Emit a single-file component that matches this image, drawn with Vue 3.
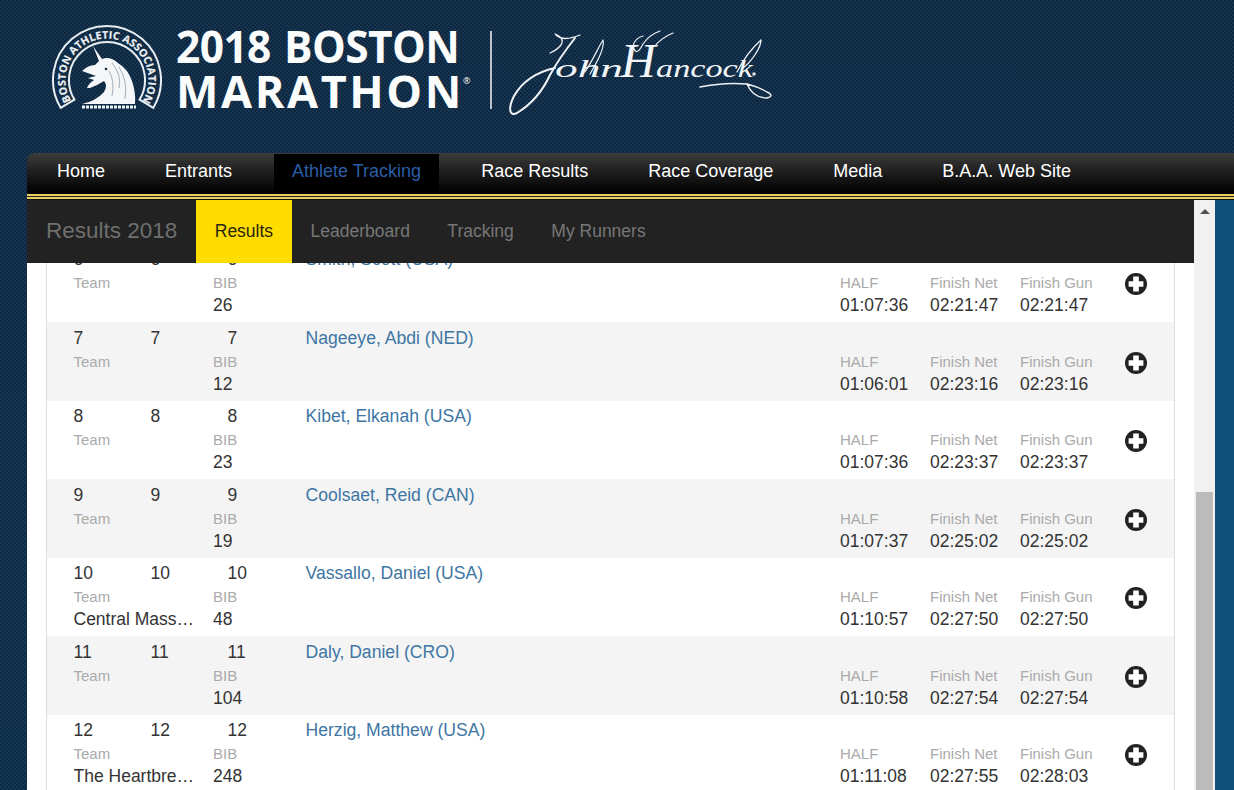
<script setup>
const nav = ['Home', 'Entrants', 'Athlete Tracking', 'Race Results', 'Race Coverage', 'Media', 'B.A.A. Web Site']
const tabs = ['Results', 'Leaderboard', 'Tracking', 'My Runners']
const rows = [
  { n: 6, name: 'Smith, Scott (USA)', team: '', bib: 26, half: '01:07:36', net: '02:21:47', gun: '02:21:47' },
  { n: 7, name: 'Nageeye, Abdi (NED)', team: '', bib: 12, half: '01:06:01', net: '02:23:16', gun: '02:23:16' },
  { n: 8, name: 'Kibet, Elkanah (USA)', team: '', bib: 23, half: '01:07:36', net: '02:23:37', gun: '02:23:37' },
  { n: 9, name: 'Coolsaet, Reid (CAN)', team: '', bib: 19, half: '01:07:37', net: '02:25:02', gun: '02:25:02' },
  { n: 10, name: 'Vassallo, Daniel (USA)', team: 'Central Massachusetts', bib: 48, half: '01:10:57', net: '02:27:50', gun: '02:27:50' },
  { n: 11, name: 'Daly, Daniel (CRO)', team: '', bib: 104, half: '01:10:58', net: '02:27:54', gun: '02:27:54' },
  { n: 12, name: 'Herzig, Matthew (USA)', team: 'The Heartbreakers', bib: 248, half: '01:11:08', net: '02:27:55', gun: '02:28:03' }
]
</script>

<template>
  <div class="page">
    <header class="masthead">
      <svg class="seal" viewBox="0 0 110 88" width="110" height="88">
        <path d="M8.7 82.8A54 54 0 1 1 101.3 82.8L87.6 74.6A38 38 0 1 0 22.4 74.6Z" fill="none" stroke="#e8edf1" stroke-width="2" />
        <path id="sealArc" d="M19.5 76.5A41.5 41.5 0 1 1 90.5 76.5" fill="none" />
        <text class="seal-text"><textPath href="#sealArc" startOffset="1" textLength="174" lengthAdjust="spacing">BOSTON ATHLETIC ASSOCIATION</textPath></text>
        <path d="M41 21L50 34Q58 31 66 38Q76 44 80 56Q84 68 83 79L30 79Q44 76 52 67Q56 60 52 56Q46 60 38 63L35 63Q37 58 42 55L36 53L44 51L30 46Q36 40 43 40L47 36Z" fill="#f4f6f7" />
        <circle cx="54" cy="44" r="1.3" fill="#12304c" />
        <path d="M60 38Q70 50 67 63M67 42Q76 56 73 74M57 46Q63 56 60 71" fill="none" stroke="#8d9cab" stroke-width=".8" />
        <path d="M30 82H84" stroke="#eef1f3" stroke-width="3" stroke-dasharray="3 1" />
      </svg>
      <div class="event">
        <div class="line-one">2018 BOSTON</div>
        <div class="line-two">MARATHON<sup>®</sup></div>
      </div>
      <div class="divider"></div>
      <svg class="signature" viewBox="0 0 266 90" width="266" height="90">
        <g fill="none" stroke="#eef2f5" stroke-linecap="round" stroke-linejoin="round">
          <path d="M46 4Q56 8 52 15Q48 20 41 23M47 5Q54 12 71 5" stroke-width="1.3" />
          <path d="M66 8C55 22 47 34 41 45C35 58 26 72 8 83C0 87 -1 78 5 66C13 52 28 42 46 38" stroke-width="2" />
          <path d="M76 42C84 30 90 16 94 10C96 18 88 32 81 44" stroke-width="1.2" />
          <path d="M228 42C234 30 243 18 252 10C252 18 242 32 234 38" stroke-width="1.3" />
          <path d="M191 57Q215 52 238 54" stroke-width="1.5" />
          <path d="M238 54Q244 68 258 68Q266 66 258 62Q250 57 238 54" stroke-width="1.4" />
          <path d="M151 1Q140 5 134 14Q127 28 124 16Q126 8 134 6M164 3Q152 8 146 16" stroke-width="1.2" />
        </g>
        <circle cx="245" cy="44" r="1.8" fill="#dfe5ea" />
        <text class="sig-text" x="46" y="47" textLength="68" lengthAdjust="spacingAndGlyphs">ohn</text>
        <text class="sig-cap" x="112" y="47">H</text>
        <text class="sig-text" x="147" y="47" textLength="97" lengthAdjust="spacingAndGlyphs">ancock</text>
      </svg>
    </header>

    <nav class="mainnav">
      <a v-for="item in nav" :key="item" class="navlink" :class="{ current: item === 'Athlete Tracking' }">{{ item }}</a>
    </nav>
    <div class="rule"></div>

    <div class="content">
      <section class="panel">
        <div class="subnav">
          <span class="subtitle">Results 2018</span>
          <a v-for="tab in tabs" :key="tab" class="tab" :class="{ on: tab === 'Results' }">{{ tab }}</a>
        </div>
        <div class="list">
          <article v-for="row in rows" :key="row.n" class="row">
            <div class="who">
              <div class="place-line">
                <span class="place">{{ row.n }}</span>
                <span class="place">{{ row.n }}</span>
                <span class="place third">{{ row.n }}</span>
                <a class="runner">{{ row.name }}</a>
              </div>
              <div class="meta">
                <div class="team">
                  <div class="label">Team</div>
                  <div class="value ellipsis">{{ row.team }}</div>
                </div>
                <div class="bib">
                  <div class="label">BIB</div>
                  <div class="value">{{ row.bib }}</div>
                </div>
              </div>
            </div>
            <div class="split"><div class="label">HALF</div><div class="value">{{ row.half }}</div></div>
            <div class="split"><div class="label">Finish Net</div><div class="value">{{ row.net }}</div></div>
            <div class="split"><div class="label">Finish Gun</div><div class="value">{{ row.gun }}</div></div>
            <svg class="plus" viewBox="0 0 22 22" width="22" height="22">
              <circle cx="11" cy="11" r="11" fill="#222" />
              <path d="M8.2 3.6H13.8V8.2H18.4V13.8H13.8V18.4H8.2V13.8H3.6V8.2H8.2Z" fill="#fff" />
            </svg>
          </article>
        </div>
      </section>
      <div class="scrollbar">
        <span class="arrow"></span>
        <span class="thumb"></span>
      </div>
      <div class="strip"></div>
    </div>
  </div>
</template>

<style>
html, body { margin: 0; background: #0f2a45; }
</style>

<style scoped>
.page {
  width: 1234px;
  height: 790px;
  overflow: hidden;
  display: flex;
  flex-direction: column;
  font-family: "Liberation Sans", Arial, sans-serif;
  background:
    linear-gradient(180deg, rgba(15, 50, 80, 0) 0, rgba(14, 62, 98, .2) 100%),
    repeating-conic-gradient(#18354f 0 25%, #0c2640 0 50%) 0 0 / 4px 4px;
}
.masthead {
  height: 153px;
  flex: none;
  display: flex;
  align-items: flex-start;
  padding-left: 52px;
  box-sizing: border-box;
}
.seal { margin-top: 25px; flex: none; }
.seal-text {
  font: 700 10.5px "Open Sans", sans-serif;
  fill: #eef1f4;
  stroke: #eef1f4;
  stroke-width: .2px;
}
.event {
  margin: 23px 0 0 14px;
  width: 314px;
  flex: none;
  color: #fbfcfc;
  font: 700 45px/45px "Open Sans", sans-serif;
  white-space: nowrap;
}
.line-one {
  letter-spacing: -.6px;
  word-spacing: 3px;
  transform: scaleX(.943);
  transform-origin: 0 50%;
}
.line-two { letter-spacing: 2.6px; }
.line-two sup {
  font-size: 9px;
  line-height: 0;
  letter-spacing: 0;
  vertical-align: 24px;
  font-weight: 400;
  margin-left: -1px;
}
.divider {
  width: 2px;
  height: 78px;
  margin: 31px 17px 0 0;
  background: #b9c3cc;
  flex: none;
}
.signature { margin-top: 30px; flex: none; overflow: visible; }
.sig-text { font: italic 400 26px "Liberation Serif", serif; fill: #f2f5f7; }
.sig-cap { font: italic 400 48px "Liberation Serif", serif; fill: #f2f5f7; }

.mainnav {
  flex: none;
  height: 41px;
  margin-left: 27px;
  border-radius: 8px 0 0 0;
  background: linear-gradient(180deg, #3c3c3c 0, #1f1f1f 45%, #000 100%);
  display: flex;
}
.navlink {
  padding: 0 30px;
  font-size: 18px;
  line-height: 36px;
  color: #fff;
  white-space: nowrap;
}
.navlink.current {
  margin: 1px 12px 0;
  padding: 0 18px;
  background: #000;
  color: #2a5ea5;
  line-height: 34px;
}
.rule {
  flex: none;
  height: 1px;
  margin: 0 0 1px 27px;
  border-top: 2px solid #e6cf5e;
  border-bottom: 2px solid #e6cf5e;
  background: #222;
  box-shadow: 0 1px 0 #111;
}
.content {
  flex: 1;
  min-height: 0;
  margin-left: 27px;
  display: flex;
}
.panel {
  width: 1167px;
  flex: none;
  position: relative;
  overflow: hidden;
  background: #fff;
}
.subnav {
  position: absolute;
  z-index: 2;
  top: 0;
  left: 0;
  right: 0;
  height: 63px;
  background: #222;
  display: flex;
  align-items: stretch;
  line-height: 62px;
  font-size: 17.5px;
}
.subtitle {
  width: 169px;
  padding-left: 19px;
  box-sizing: border-box;
  font-size: 22.5px;
  color: #6f6f6f;
  white-space: nowrap;
}
.tab {
  padding: 0 18.75px;
  color: #777;
  white-space: nowrap;
}
.tab.on {
  background: #ffdc00;
  color: #2a2410;
}
.list {
  margin-left: 19px;
  width: 1129px;
  padding-top: 43.5px;
  border-left: 1px solid #ddd;
  border-right: 1px solid #ddd;
  box-sizing: border-box;
  min-height: 100%;
}
.row {
  height: 78.5px;
  box-sizing: border-box;
  padding: 3.5px 0 0 26.5px;
  display: flex;
  align-items: flex-start;
  color: #333;
  font-size: 17.5px;
}
.row:nth-child(even) { background: #f4f4f4; }
.who { width: 766.5px; flex: none; }
.place-line {
  height: 25px;
  line-height: 25px;
  display: flex;
}
.place { width: 77px; flex: none; }
.place.third { width: 78px; }
.runner { color: #3e76a3; white-space: nowrap; font-size: 17.6px; }
.meta { display: flex; }
.team { width: 139.5px; flex: none; }
.ellipsis {
  width: 122px;
  overflow: hidden;
  text-overflow: ellipsis;
  white-space: nowrap;
}
.label {
  height: 22px;
  line-height: 22px;
  font-size: 15px;
  color: #aaa;
  white-space: nowrap;
}
.value {
  height: 22px;
  line-height: 22px;
  white-space: nowrap;
}
.split {
  width: 90px;
  flex: none;
  padding-top: 25px;
}
.plus {
  flex: none;
  margin: 26px 0 0 14.5px;
}
.scrollbar {
  width: 21px;
  flex: none;
  background: #f1f1f1;
  display: flex;
  flex-direction: column;
  align-items: center;
}
.arrow {
  flex: none;
  width: 0;
  height: 0;
  margin-top: 9px;
  border-left: 5px solid transparent;
  border-right: 5px solid transparent;
  border-bottom: 5px solid #505050;
}
.thumb {
  flex: none;
  width: 17px;
  height: 300px;
  margin-top: 278px;
  background: #bbb;
}
.strip {
  flex: 1;
  background: #0e5078;
}
</style>
